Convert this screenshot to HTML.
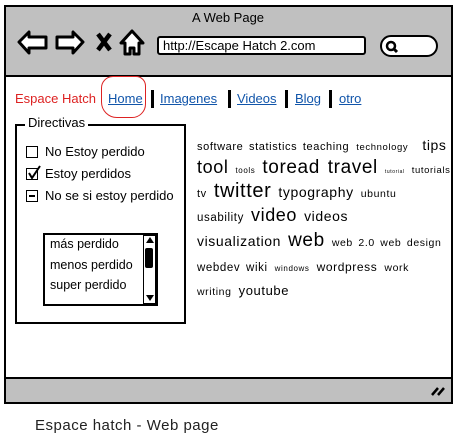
<!DOCTYPE html>
<html><head><meta charset="utf-8"><style>
*{margin:0;padding:0;box-sizing:border-box}
body{width:459px;height:445px;background:#fff;position:relative;overflow:hidden;font-family:"Liberation Sans","DejaVu Sans",sans-serif;color:#000}
.a{position:absolute;white-space:nowrap}
.t{position:absolute;white-space:nowrap;line-height:1}
.c{letter-spacing:0.6px;word-spacing:2px}
</style></head><body>
<div class="a" style="left:4px;top:5px;width:449px;height:399px;border:2.5px solid #000;background:#fff"></div>
<div class="a" style="left:6px;top:7px;width:445px;height:70px;background:#c0c0c0;border-bottom:2.5px solid #000"></div>
<div class="a" style="left:6px;top:377px;width:445px;height:25px;background:#c0c0c0;border-top:2.5px solid #000"></div>
<div class="t" style="left:192px;top:11px;font-size:13px">A Web Page</div>
<svg class="a" style="left:15px;top:28px" width="135" height="32" viewBox="0 0 135 32">
<path d="M4 14 L14 4 L14 9 L31 9 L31 20 L14 20 L14 25 Z" fill="#fff" stroke="#000" stroke-width="3" stroke-linejoin="round"/>
<path d="M68 14 L58 4 L58 9 L42 9 L42 20 L58 20 L58 25 Z" fill="#fff" stroke="#000" stroke-width="3" stroke-linejoin="round"/>
<path d="M83 6 L95 22 M95 6 L83 22" stroke="#000" stroke-width="4.5"/>
<path d="M117 3 L106 15 L110 15 L110 26 L115 26 L115 20 L119 20 L119 26 L124 26 L124 15 L128 15 Z" fill="#fff" stroke="#000" stroke-width="3" stroke-linejoin="round"/>
</svg>
<div class="a" style="left:157px;top:36px;width:209px;height:19px;border:2.5px solid #000;border-radius:3px;background:#fff"></div>
<div class="t" style="left:163px;top:39px;font-size:13px">http://Escape Hatch 2.com</div>
<div class="a" style="left:380px;top:35px;width:58px;height:22px;border:2.5px solid #000;border-radius:11px;background:#fff"></div>
<svg class="a" style="left:385px;top:40px" width="14" height="14"><circle cx="6" cy="6" r="4" fill="none" stroke="#000" stroke-width="2.5"/><path d="M9 9 L12 12" stroke="#000" stroke-width="3"/></svg>
<div class="t" style="left:15px;top:92px;font-size:13px;color:#d22">Espace Hatch</div>
<div class="t" style="left:108px;top:92px;font-size:13px;color:#15a;text-decoration:underline">Home</div>
<div class="a" style="left:101px;top:76px;width:45px;height:42px;border:1.5px solid #d22;border-radius:12px 10px 14px 16px"></div>
<div class="a" style="left:151px;top:90px;width:2.5px;height:18px;background:#000"></div>
<div class="t" style="left:160px;top:92px;font-size:13px;color:#15a;text-decoration:underline">Imagenes</div>
<div class="a" style="left:228px;top:90px;width:2.5px;height:18px;background:#000"></div>
<div class="t" style="left:237px;top:92px;font-size:13px;color:#15a;text-decoration:underline">Videos</div>
<div class="a" style="left:285px;top:90px;width:2.5px;height:18px;background:#000"></div>
<div class="t" style="left:295px;top:92px;font-size:13px;color:#15a;text-decoration:underline">Blog</div>
<div class="a" style="left:329px;top:90px;width:2.5px;height:18px;background:#000"></div>
<div class="t" style="left:339px;top:92px;font-size:13px;color:#15a;text-decoration:underline">otro</div>
<div class="a" style="left:15px;top:124px;width:171px;height:200px;border:2px solid #000"></div>
<div class="t" style="left:25px;top:116px;font-size:13px;background:#fff;padding:0 3px">Directivas</div>
<div class="a" style="left:26px;top:146px;width:12px;height:12px;border:1.5px solid #000"></div>
<div class="t" style="left:45px;top:145px;font-size:13px">No Estoy perdido</div>
<div class="a" style="left:26px;top:168px;width:12px;height:12px;border:1.5px solid #000"></div>
<svg class="a" style="left:26px;top:164px" width="16" height="16"><path d="M3 9 L6 14 L14 2" fill="none" stroke="#000" stroke-width="2"/></svg>
<div class="t" style="left:45px;top:167px;font-size:13px">Estoy perdidos</div>
<div class="a" style="left:26px;top:190px;width:12px;height:12px;border:1.5px solid #000"></div>
<div class="a" style="left:29px;top:195px;width:6px;height:2px;background:#000"></div>
<div class="t" style="left:45px;top:189px;font-size:13px">No se si estoy perdido</div>
<div class="a" style="left:43px;top:233px;width:115px;height:73px;border:2px solid #000"></div>
<div class="t" style="left:50px;top:238px;font-size:12.5px">más perdido</div>
<div class="t" style="left:50px;top:259px;font-size:12.5px">menos perdido</div>
<div class="t" style="left:50px;top:279px;font-size:12.5px">super perdido</div>
<div class="a" style="left:143px;top:235px;width:13px;height:69px;border:1px solid #000"></div>
<div class="a" style="left:146px;top:237px;width:0;height:0;border-left:4px solid transparent;border-right:4px solid transparent;border-bottom:6px solid #000"></div>
<div class="a" style="left:145px;top:248px;width:8px;height:20px;background:#000;border-radius:2px"></div>
<div class="a" style="left:146px;top:295px;width:0;height:0;border-left:4px solid transparent;border-right:4px solid transparent;border-top:6px solid #000"></div>
<div class="a c" style="left:197px;top:138px;line-height:1">
<span style="font-size:11px">software statistics teaching</span> <span style="font-size:9.5px">technology</span>&nbsp; <span style="font-size:14px">tips</span></div>
<div class="a c" style="left:197px;top:158px;line-height:1"><span style="font-size:18px">tool</span> <span style="font-size:8px">tools</span> <span style="font-size:19px">toread travel</span> <span style="font-size:5px">tutorial</span> <span style="font-size:9.5px">tutorials</span></div>
<div class="a c" style="left:197px;top:181px;line-height:1"><span style="font-size:11px">tv</span> <span style="font-size:20px">twitter</span> <span style="font-size:14px">typography</span> <span style="font-size:10.5px">ubuntu</span></div>
<div class="a c" style="left:197px;top:206px;line-height:1"><span style="font-size:11.5px">usability</span> <span style="font-size:18px">video</span> <span style="font-size:14px">videos</span></div>
<div class="a c" style="left:197px;top:231px;line-height:1"><span style="font-size:14px">visualization</span> <span style="font-size:19px">web</span> <span style="font-size:10.5px">web 2.0 web design</span></div>
<div class="a c" style="left:197px;top:259px;line-height:1"><span style="font-size:11.5px">webdev wiki</span> <span style="font-size:8px">windows</span> <span style="font-size:12px">wordpress</span> <span style="font-size:10.5px">work</span></div>
<div class="a c" style="left:197px;top:283px;line-height:1"><span style="font-size:10.5px">writing</span> <span style="font-size:13px">youtube</span></div>
<svg class="a" style="left:430px;top:385px" width="16" height="12"><path d="M2 10 L8 3 M8 10 L14 3" stroke="#000" stroke-width="2.5"/></svg>
<div class="t" style="left:35px;top:418px;font-size:15px;letter-spacing:0.5px;color:#222">Espace hatch - Web page</div>
</body></html>
